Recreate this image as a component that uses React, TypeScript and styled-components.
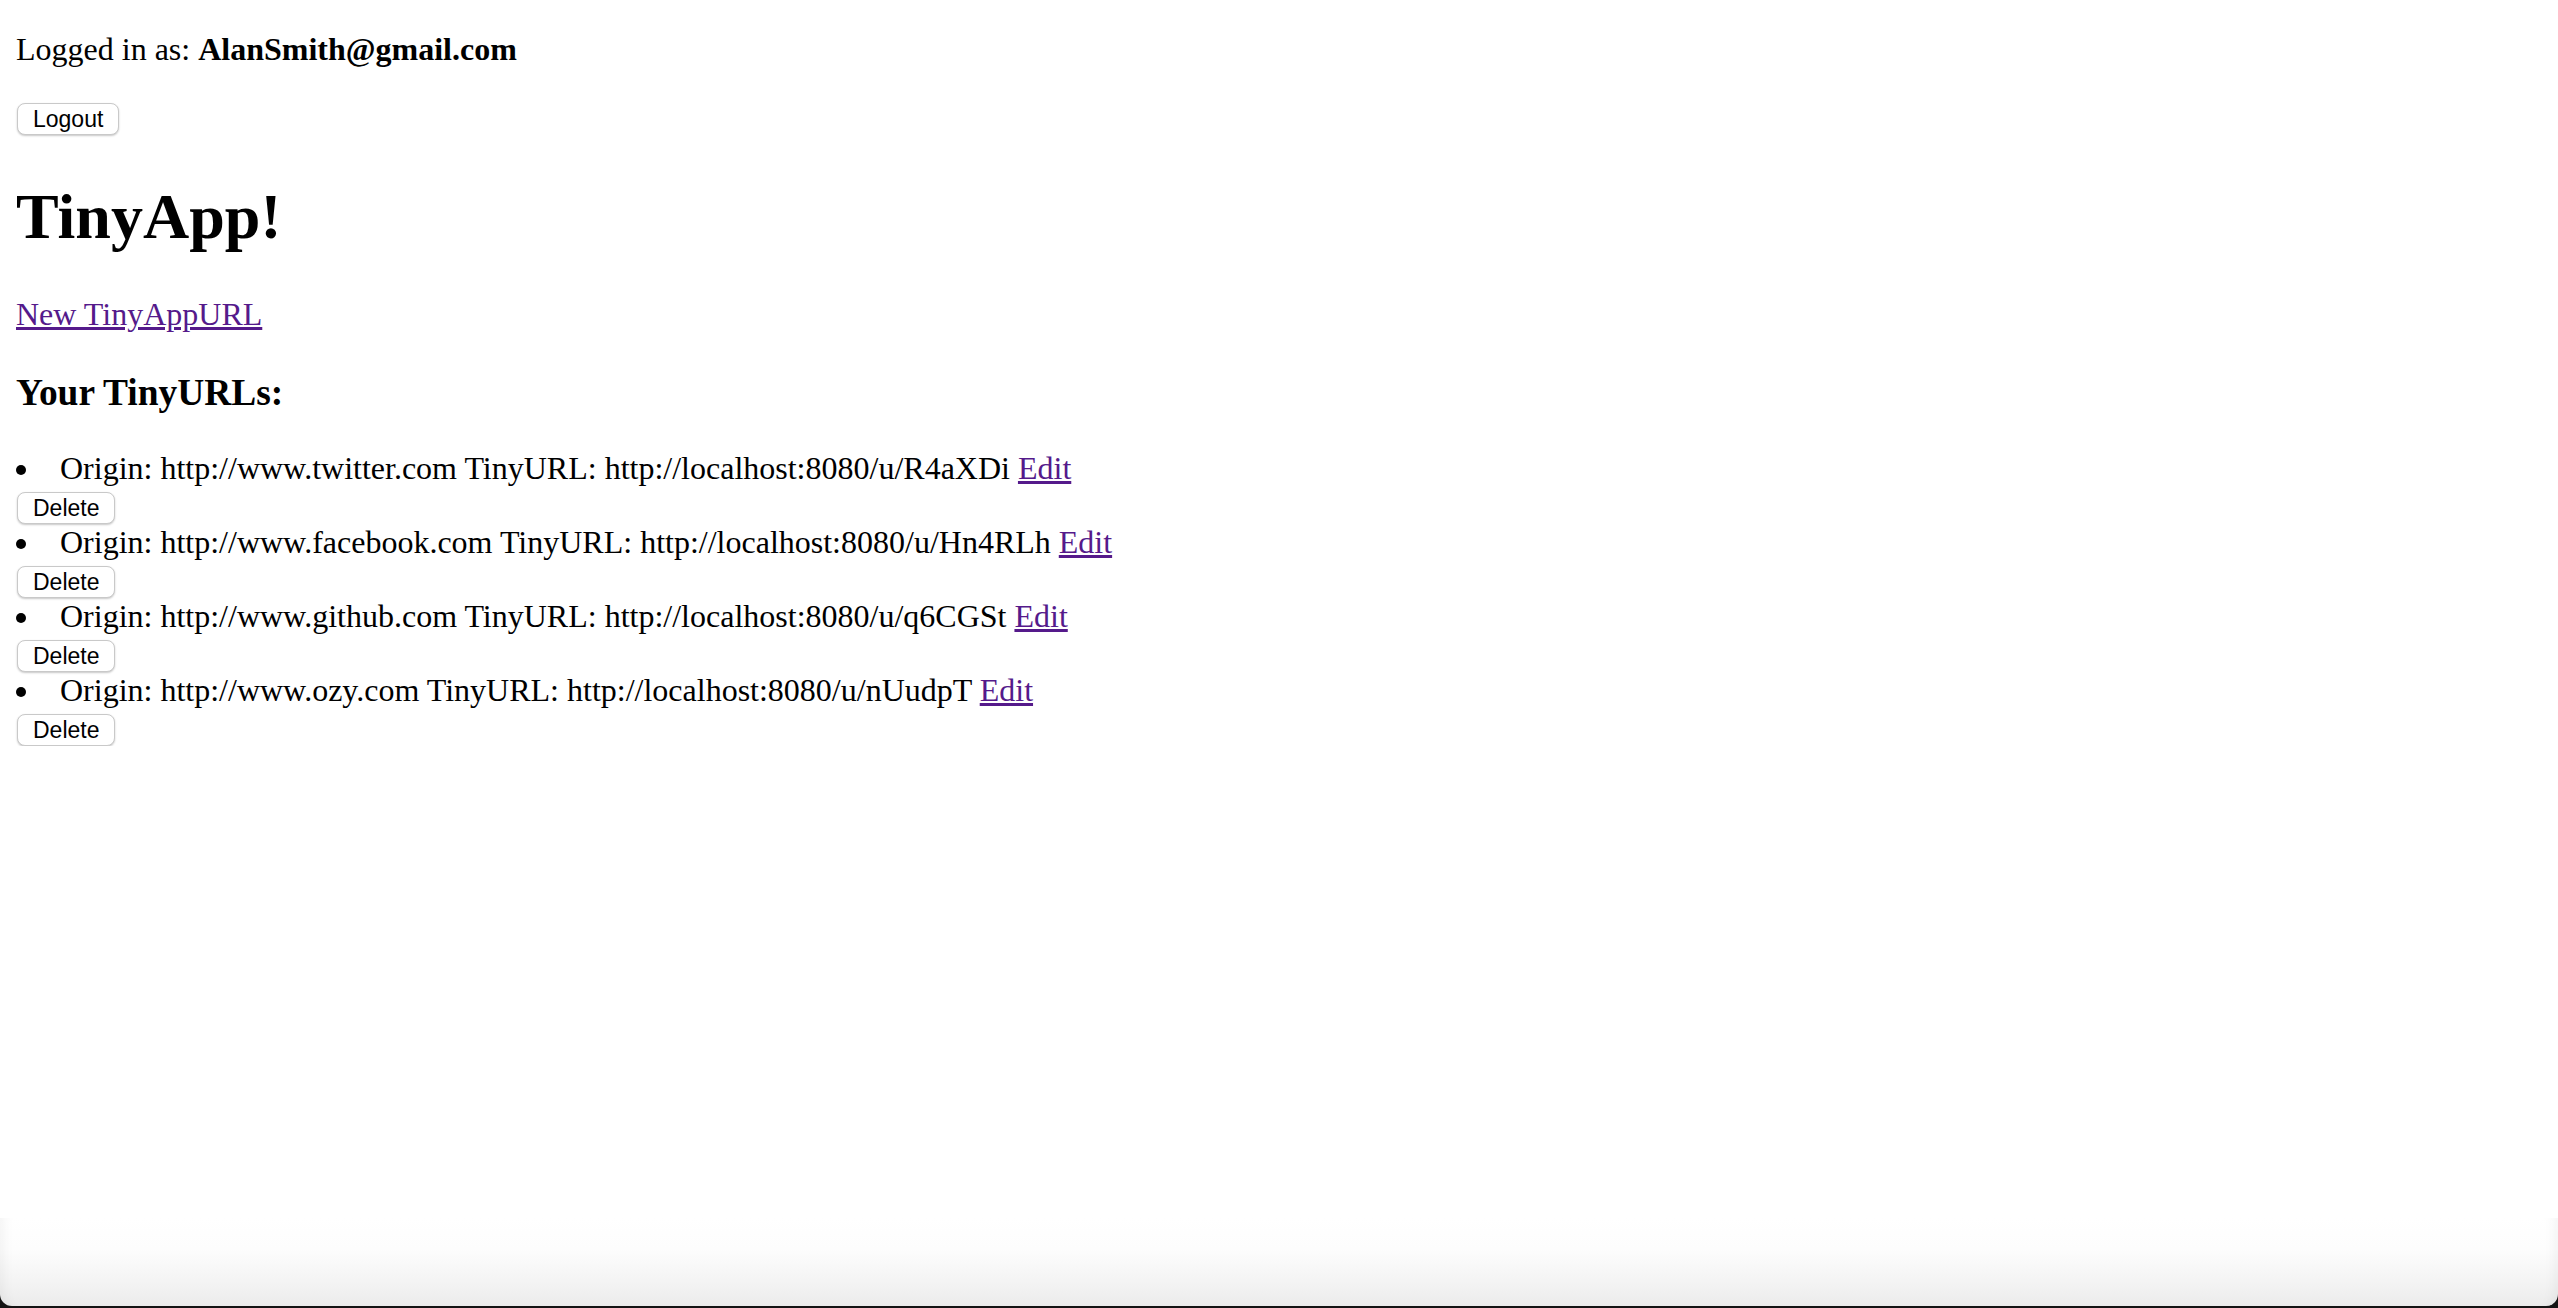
import styled, { createGlobalStyle } from 'styled-components';

const GlobalStyle = createGlobalStyle`
  html, body {
    margin: 0;
    padding: 0;
    background: #fff;
  }

  body {
    font-family: 'Liberation Serif', 'Times New Roman', serif;
    font-size: 32px;
    color: #000;
  }
`;

const Page = styled.div`
  padding: 0 16px;
  overflow: hidden;
`;

const Greeting = styled.p`
  margin: 31px 0 0;
  line-height: 37px;

  b {
    font-weight: bold;
  }
`;

const ButtonForm = styled.form<{ $top: number }>`
  display: flex;
  padding-top: ${(p) => p.$top}px;
`;

const Button = styled.button`
  height: 32px;
  padding: 0 15px;
  margin: 0 0 0 1px;
  background: #fff;
  border: 1px solid #c9c9c9;
  border-radius: 8px;
  box-shadow: 0 1px 2px rgba(0, 0, 0, 0.22);
  font-family: 'Liberation Sans', Arial, sans-serif;
  font-size: 23px;
  line-height: 30px;
  color: #000;
  cursor: pointer;
`;

const Title = styled.h1`
  margin: 45px 0 0;
  font-size: 64px;
  line-height: 74px;
  font-weight: bold;
`;

const NewLink = styled.p`
  margin: 42px 0 0;
  line-height: 37px;

  a {
    color: #551a8b;
  }
`;

const SubTitle = styled.h3`
  margin: 38px 0 0;
  font-size: 37.44px;
  line-height: 43px;
  font-weight: bold;
`;

const UrlList = styled.ul`
  margin: 36px 0 0;
  padding: 0;
  list-style: none;
`;

const UrlItem = styled.li`
  line-height: 37px;
`;

const ItemLine = styled.div`
  &::before {
    content: '';
    display: inline-block;
    width: 10px;
    height: 10px;
    margin-right: 34px;
    border-radius: 50%;
    background: #000;
    vertical-align: 4px;
  }

  a {
    color: #551a8b;
  }
`;

const Shade = styled.div`
  position: fixed;
  left: 0;
  right: 0;
  bottom: 0;
  height: 90px;
  background: #141414;
  pointer-events: none;
`;

const ShadeGlass = styled.div`
  height: calc(100% - 2px);
  border-radius: 0 0 12px 12px;
  background: linear-gradient(to bottom, #fff 0%, #fdfdfd 35%, #f3f3f3 75%, #ebebeb 100%);
  box-shadow: inset 14px 0 14px -12px rgba(0, 0, 0, 0.06),
    inset -14px 0 14px -12px rgba(0, 0, 0, 0.06);
`;

const urls = [
  { origin: 'http://www.twitter.com', short: 'R4aXDi' },
  { origin: 'http://www.facebook.com', short: 'Hn4RLh' },
  { origin: 'http://www.github.com', short: 'q6CGSt' },
  { origin: 'http://www.ozy.com', short: 'nUudpT' },
];

function App() {
  const handleSubmit = (e: React.FormEvent<HTMLFormElement>) => {
    e.preventDefault();
  };

  return (
    <>
      <GlobalStyle />
      <Page>
        <Greeting>
          Logged in as: <b>AlanSmith@gmail.com</b>
        </Greeting>
        <ButtonForm $top={35} onSubmit={handleSubmit}>
          <Button type="submit">Logout</Button>
        </ButtonForm>

        <Title>TinyApp!</Title>
        <NewLink>
          <a href="#new">New TinyAppURL</a>
        </NewLink>

        <SubTitle>Your TinyURLs:</SubTitle>
        <UrlList>
          {urls.map((url) => (
            <UrlItem key={url.short}>
              <ItemLine>
                Origin: {url.origin} TinyURL: http://localhost:8080/u/{url.short}{' '}
                <a href={`#${url.short}`}>Edit</a>
              </ItemLine>
              <ButtonForm $top={5} onSubmit={handleSubmit}>
                <Button type="submit">Delete</Button>
              </ButtonForm>
            </UrlItem>
          ))}
        </UrlList>
      </Page>
      <Shade>
        <ShadeGlass />
      </Shade>
    </>
  );
}

export default App;
